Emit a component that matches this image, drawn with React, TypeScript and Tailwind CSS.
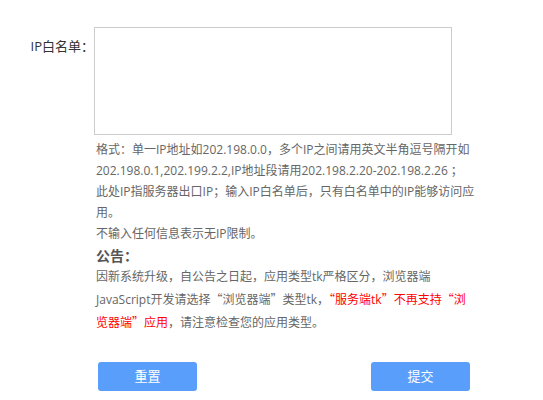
const Q = ({ children }: { children: string }) => (
  <span className="font-['Noto_Sans_CJK_SC',sans-serif]">{children}</span>
)

export default function App() {
  return (
    <div className="w-[543px] h-[400px] bg-white pt-[27px] font-['Open_Sans','Noto_Sans_CJK_SC',sans-serif]">
      <div className="flex items-start">
        {/* label column */}
        <label className="w-[94px] shrink-0 pt-[9px] text-right text-[13px] leading-[20px] text-[#333]">
          IP白名单<Q>：</Q>
        </label>

        {/* form column */}
        <div className="flex flex-col">
          <textarea className="block w-[358px] h-[108px] resize-none border border-[#ccc] bg-white outline-none" />

          <p className="mt-[4px] pl-[2px] whitespace-nowrap text-[12px] leading-[21px] text-[#666]">
            格式：单一IP地址如202.198.0.0，多个IP之间请用英文半角逗号隔开如
            <br />
            202.198.0.1,202.199.2.2,IP地址段请用202.198.2.20-202.198.2.26 ；
            <br />
            此处IP指服务器出口IP；输入IP白名单后，只有白名单中的IP能够访问应
            <br />
            用。
            <br />
            不输入任何信息表示无IP限制。
          </p>

          <h4 className="mt-[2px] pl-[2px] text-[14px] font-bold leading-[20px] text-[#555]">公告：</h4>

          <p className="pl-[2px] whitespace-nowrap text-[12px] leading-[22px] text-[#666]">
            因新系统升级，自公告之日起，应用类型tk严格区分，浏览器端
            <br />
            JavaScript开发请选择<Q>“</Q>浏览器端<Q>”</Q>类型tk，
            <span className="text-[#f00]">
              <Q>“</Q>服务端tk<Q>”</Q>不再支持<Q>“</Q>浏
            </span>
            <br />
            <span className="text-[#f00]">
              览器端<Q>”</Q>应用
            </span>
            ，请注意检查您的应用类型。
          </p>

          <div className="mt-[28px] ml-[4px] flex w-[372px] justify-between">
            <button className="h-[29px] w-[99px] rounded-[3px] bg-[#5a9efc] text-[13px] text-white">
              重置
            </button>
            <button className="h-[29px] w-[99px] rounded-[3px] bg-[#5a9efc] text-[13px] text-white">
              提交
            </button>
          </div>
        </div>
      </div>
    </div>
  )
}
